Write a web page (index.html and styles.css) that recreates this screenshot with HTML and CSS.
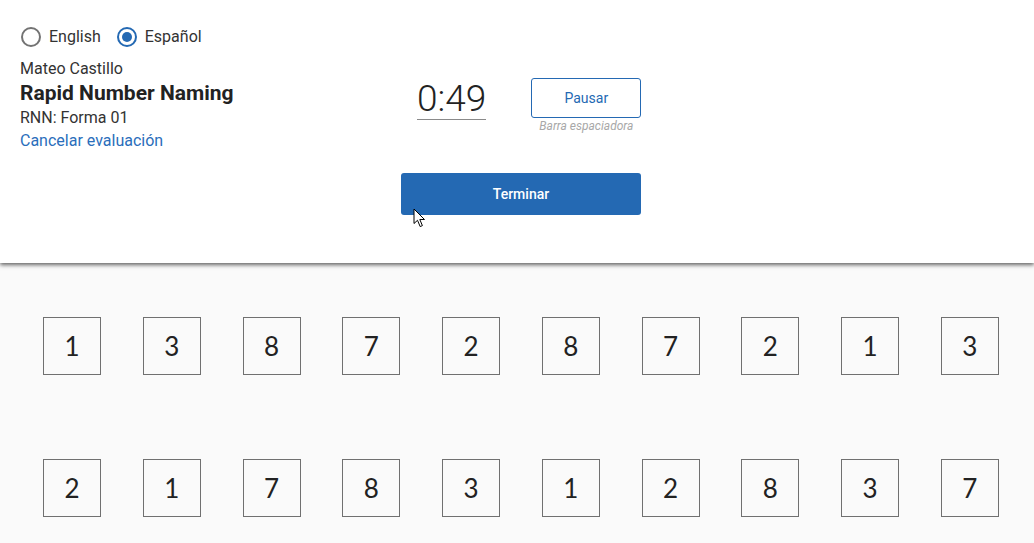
FILE: index.html
```html
<!DOCTYPE html>
<html lang="en">
<head>
    <meta charset="UTF-8">
    <meta name="viewport" content="width=device-width, initial-scale=1.0">
    <title>Rapid Number Naming</title>
    <link rel="stylesheet" href="styles.css">
</head>
<body>
    <header class="test-header">
        <div class="info">
            <div class="lang-switch">
                <label class="radio"><span class="radio-dot"></span>English</label>
                <label class="radio checked"><span class="radio-dot"></span>Español</label>
            </div>
            <div class="student">Mateo Castillo</div>
            <div class="test-name">Rapid Number Naming</div>
            <div class="form-name">RNN: Forma 01</div>
            <a class="cancel-link" href="#">Cancelar evaluación</a>
        </div>

        <div class="controls">
            <div class="timer-row">
                <div class="timer">0:49</div>
                <div class="pause-group">
                    <button class="pause-button">Pausar</button>
                    <div class="hint">Barra espaciadora</div>
                </div>
            </div>
            <button class="finish-button">Terminar</button>
        </div>

        <!-- mouse pointer caught in the screenshot -->
        <svg class="cursor" width="13" height="20" viewBox="0 0 13 20">
            <path d="M1 1 L1 15.5 L4.5 12.3 L7.2 18.6 L9.4 17.6 L6.8 11.5 L11.5 11.5 Z" fill="#fff" stroke="#000" stroke-width="1" stroke-linejoin="round"/>
        </svg>
    </header>

    <main class="number-grid">
        <div class="number-row">
            <div class="cell">1</div>
            <div class="cell">3</div>
            <div class="cell">8</div>
            <div class="cell">7</div>
            <div class="cell">2</div>
            <div class="cell">8</div>
            <div class="cell">7</div>
            <div class="cell">2</div>
            <div class="cell">1</div>
            <div class="cell">3</div>
        </div>
        <div class="number-row">
            <div class="cell">2</div>
            <div class="cell">1</div>
            <div class="cell">7</div>
            <div class="cell">8</div>
            <div class="cell">3</div>
            <div class="cell">1</div>
            <div class="cell">2</div>
            <div class="cell">8</div>
            <div class="cell">3</div>
            <div class="cell">7</div>
        </div>
    </main>
</body>
</html>
```

FILE: styles.css
```css
body {
    margin: 0;
    padding: 0;
    font-family: Roboto, "Liberation Sans", Arial, sans-serif;
    color: #222;
    background-color: #fafafa;
    overflow: hidden;
}

.test-header {
    position: relative;
    display: flex;
    height: 263px;
    box-sizing: border-box;
    padding: 26px 20px 0 20px;
    background-color: #fff;
    box-shadow: 0 2px 4px rgba(0, 0, 0, 0.6);
}

.info {
    width: 381px;
    display: flex;
    flex-direction: column;
    align-items: flex-start;
}

.lang-switch {
    display: flex;
    gap: 16px;
    height: 20px;
    margin: 1px 0 11px 1px;
}

.radio {
    display: flex;
    align-items: center;
    gap: 8px;
    font-size: 16px;
    line-height: 20px;
    color: #333;
}

.radio-dot {
    width: 16px;
    height: 16px;
    border: 2px solid #737373;
    border-radius: 50%;
    display: flex;
    align-items: center;
    justify-content: center;
}

.radio.checked .radio-dot {
    border-color: #2469b3;
}

.radio.checked .radio-dot::after {
    content: "";
    width: 10px;
    height: 10px;
    border-radius: 50%;
    background-color: #2469b3;
}

.student {
    font-size: 16px;
    line-height: 21px;
    color: #333;
}

.test-name {
    font-size: 21px;
    line-height: 28px;
    font-weight: bold;
    color: #222;
}

.form-name {
    font-size: 16px;
    line-height: 21px;
    color: #333;
}

.cancel-link {
    margin-top: 2px;
    font-size: 16px;
    line-height: 22px;
    color: #2a6ebb;
    text-decoration: none;
}

.controls {
    width: 240px;
    padding-top: 52px;
}

.timer-row {
    display: flex;
    align-items: flex-start;
    padding-left: 16px;
    gap: 45px;
    height: 95px;
}

.timer {
    margin-top: 1px;
    font-size: 37px;
    font-weight: 300;
    line-height: 40px;
    color: #222;
    border-bottom: 1px solid #8a8a8a;
}

.pause-group {
    width: 110px;
    text-align: center;
}

.pause-button {
    width: 110px;
    height: 40px;
    background-color: #fff;
    border: 1px solid #2469b3;
    border-radius: 3px;
    color: #2469b3;
    font-family: inherit;
    font-size: 14px;
    cursor: pointer;
}

.hint {
    margin-top: 1px;
    font-size: 12px;
    line-height: 14px;
    font-style: italic;
    color: #a8a8a8;
}

.finish-button {
    display: block;
    width: 240px;
    height: 42px;
    background-color: #2469b3;
    border: none;
    border-radius: 3px;
    color: #fff;
    font-family: inherit;
    font-size: 14px;
    font-weight: 500;
    cursor: pointer;
}

.cursor {
    position: absolute;
    left: 413px;
    top: 208px;
}

.number-grid {
    padding: 54px 35px 0 43px;
    display: flex;
    flex-direction: column;
    gap: 84px;
}

.number-row {
    display: flex;
    justify-content: space-between;
}

.cell {
    width: 56px;
    height: 56px;
    border: 1px solid #707070;
    display: flex;
    align-items: center;
    justify-content: center;
    font-family: Lato, "DejaVu Sans", sans-serif;
    font-size: 26px;
    font-weight: 400;
    color: #222;
}
```
